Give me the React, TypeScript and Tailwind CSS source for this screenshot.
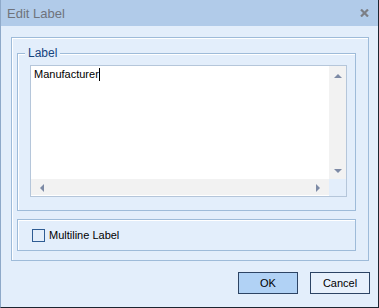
import React from "react";

function Arrow({ dir }: { dir: "up" | "down" | "left" | "right" }) {
  const pts = {
    up: "0,4 4,0 8,4",
    down: "0,0 8,0 4,4",
    left: "4,0 4,8 0,4",
    right: "0,0 0,8 4,4",
  }[dir];
  const vertical = dir === "up" || dir === "down";
  return (
    <svg width={vertical ? 8 : 4} height={vertical ? 4 : 8} viewBox={vertical ? "0 0 8 4" : "0 0 4 8"}>
      <polygon points={pts} fill="#7d8aa5" />
    </svg>
  );
}

export default function App() {
  return (
    <div className="flex h-[308px] w-[379px] flex-col border-b border-l border-r border-[#1c2530] border-l-[#8ea9c9] bg-[#e3eefb] font-['Liberation_Sans',Arial,sans-serif] text-[11px] text-black">
      <div className="flex h-[26px] shrink-0 items-center justify-between bg-[#b1cbe9] pl-[6px] pr-[9px]">
        <span className="text-[13px] leading-none text-[#6f737c]">Edit Label</span>
        <svg width="9" height="8" viewBox="0 0 9 8">
          <path d="M1 0.5 L8 7.5 M8 0.5 L1 7.5" stroke="#7c7f86" strokeWidth="2.2" />
        </svg>
      </div>

      <div className="ml-[10px] mt-[11px] flex h-[224px] w-[358px] flex-col border border-[#9ebbd9] pl-[5px] pt-[15px] shadow-[inset_1px_1px_0_#ffffff]">
        <div className="relative h-[158px] w-[339px] border border-[#9ebbd9] pl-[12px] pt-[11px] shadow-[inset_1px_1px_0_#ffffff]">
          <span className="absolute -top-[8px] left-[7px] bg-[#e3eefb] px-[3px] text-[12px] leading-[14px] text-[#15447f]">
            Label
          </span>
          <div className="grid h-[132px] w-[317px] grid-cols-[1fr_17px] grid-rows-[1fr_17px] border border-[#b5c6da] bg-white">
            <div className="flex items-start pl-[3px] pt-[1px]">
              <span className="leading-[14px]">Manufacturer</span>
              <span className="mt-[1px] h-[13px] w-px bg-black" />
            </div>
            <div className="flex flex-col items-center justify-between bg-[#f2f2f2] pb-[6px] pt-[8px]">
              <Arrow dir="up" />
              <Arrow dir="down" />
            </div>
            <div className="flex items-center justify-between bg-[#f2f2f2] pl-[9px] pr-[9px] shadow-[inset_0_-1px_0_#ffffff]">
              <Arrow dir="left" />
              <Arrow dir="right" />
            </div>
            <div className="bg-[#e3eefb]" />
          </div>
        </div>

        <div className="mt-[8px] flex h-[32px] w-[339px] items-center border border-[#9ebbd9] pl-[14px] shadow-[inset_1px_1px_0_#ffffff]">
          <span className="h-[13px] w-[13px] border border-[#2f5c93] bg-[#e3eefb]" />
          <span className="ml-[4px] leading-none">Multiline Label</span>
        </div>
      </div>

      <div className="mt-[11px] flex justify-end gap-[12px] pr-[8px]">
        <button className="h-[22px] w-[60px] border border-[#2d4464] bg-[#b1d2f5] text-[11px] text-black">
          OK
        </button>
        <button className="h-[22px] w-[60px] border border-[#2d4464] bg-[#e8f1fc] text-[11px] text-black">
          Cancel
        </button>
      </div>
    </div>
  );
}
